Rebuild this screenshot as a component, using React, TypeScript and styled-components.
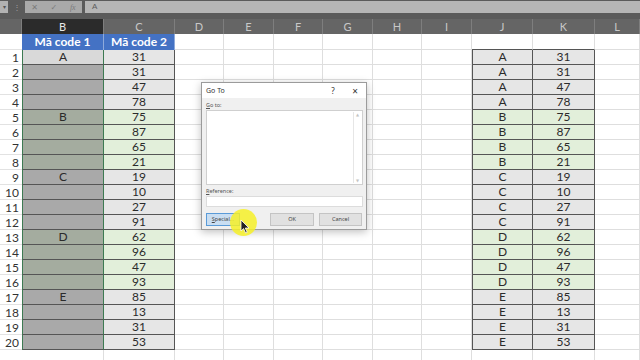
import * as React from "react";
import styled, { createGlobalStyle } from "styled-components";

const GlobalStyle = createGlobalStyle`
  html, body {
    margin: 0;
    padding: 0;
    background: #ffffff;
    overflow: hidden;
  }
`;

const colWidths = [22, 82, 71, 49, 50, 49, 50, 49, 50, 61, 62, 45];
const colLetters = ["", "B", "C", "D", "E", "F", "G", "H", "I", "J", "K", "L"];
const codes = ["A", "B", "C", "D", "E"];
const values = [31, 31, 47, 78, 75, 87, 65, 21, 19, 10, 27, 91, 62, 96, 47, 93, 85, 13, 31, 53];

const Screen = styled.div`
  position: relative;
  width: 640px;
  height: 360px;
  overflow: hidden;
  font-family: Lato, "Liberation Sans", sans-serif;
`;

const FormulaBar = styled.div`
  height: 19px;
  box-sizing: border-box;
  padding-top: 1px;
  background: #5b5b5b;
  display: flex;
  align-items: flex-start;
`;

const NameBoxEnd = styled.div`
  width: 8px;
  height: 12px;
  background: #b2b2b2;
  color: #555;
  font-size: 6px;
  line-height: 12px;
  text-align: center;
`;

const Dots = styled.div`
  width: 17px;
  height: 12px;
  color: #a0a0a0;
  font-size: 8px;
  line-height: 12px;
  text-align: center;
`;

const IconBox = styled.div`
  width: 57px;
  height: 12px;
  background: #a9a9a9;
  display: flex;
  align-items: center;
  justify-content: space-around;
  color: #7a7a7a;
  font-size: 8px;
  font-family: "DejaVu Sans", sans-serif;
`;

const FormulaInput = styled.div`
  flex: 1;
  margin-left: 3px;
  height: 12px;
  background: #b6b6b6;
  color: #5c5c5c;
  font-size: 8px;
  line-height: 12px;
  padding-left: 7px;
  font-family: "Liberation Sans", sans-serif;
`;

const Sheet = styled.div`
  display: grid;
  grid-template-columns: ${colWidths.map((w) => `${w}px`).join(" ")};
  grid-template-rows: 15px 16px repeat(21, 15px);
`;

const ColHeader = styled.div<{ $active?: boolean }>`
  box-sizing: border-box;
  background: ${({ $active }) => ($active ? "#2b2b2b" : "#656565")};
  border-right: 1px solid #7e7e7e;
  color: ${({ $active }) => ($active ? "#e8e8e8" : "#c8c8c8")};
  font-size: 11px;
  line-height: 15px;
  text-align: center;
`;

const RowHeader = styled.div`
  box-sizing: border-box;
  border-bottom: 1px solid #e2e2e2;
  color: #333;
  font-size: 12px;
  line-height: 15px;
  text-align: right;
  padding-right: 3px;
`;

const Gridline = styled.div`
  box-sizing: border-box;
  border-right: 1px solid #dedede;
  border-bottom: 1px solid #dedede;
`;

const TitleCell = styled.div`
  box-sizing: border-box;
  background: #4472c4;
  border-right: 1px solid #8eaadb;
  color: #ffffff;
  font-weight: bold;
  font-size: 12px;
  line-height: 16px;
  text-align: center;
`;

const DataCell = styled.div<{ $fill: string; $left?: string; $right?: string }>`
  box-sizing: border-box;
  background: ${({ $fill }) => $fill};
  border-bottom: 1px solid #555;
  border-right: 1px solid ${({ $right }) => $right || "#555"};
  border-left: ${({ $left }) => ($left ? `1px solid ${$left}` : "none")};
  color: #2b2b2b;
  font-size: 12px;
  line-height: 14px;
  text-align: center;
`;

/* Go To dialog */
const Dialog = styled.div`
  position: absolute;
  left: 201px;
  top: 82px;
  width: 166px;
  height: 148px;
  box-sizing: border-box;
  border: 1px solid #9b9b9b;
  background: #f0f0f0;
  box-shadow: 0 2px 8px rgba(0, 0, 0, 0.25);
  display: flex;
  flex-direction: column;
  font-family: "Noto Sans", "Open Sans", sans-serif;
  color: #333;
`;

const TitleBar = styled.div`
  height: 15px;
  background: #ffffff;
  display: flex;
  align-items: center;
  padding-left: 4px;
  font-size: 7px;
`;

const TitleText = styled.span`
  flex: 1;
`;

const TitleButton = styled.span<{ $size?: number }>`
  width: 22px;
  text-align: center;
  font-size: ${({ $size }) => $size || 8}px;
`;

const DialogBody = styled.div`
  flex: 1;
  display: flex;
  flex-direction: column;
  padding: 3px 3px 3px 4px;
`;

const Label = styled.div<{ $mt?: number }>`
  font-size: 5.5px;
  height: 8px;
  line-height: 8px;
  margin-top: ${({ $mt }) => $mt || 0}px;
  color: #555;
`;

const Underlined = styled.span`
  text-decoration: underline;
`;

const ListBox = styled.div`
  height: 75px;
  box-sizing: border-box;
  margin-top: 1px;
  background: #ffffff;
  border: 1px solid #cfcfcf;
  display: flex;
  justify-content: flex-end;
`;

const ScrollTrack = styled.div`
  width: 7px;
  margin: 1px;
  border-left: 1px solid #e6e6e6;
  display: flex;
  flex-direction: column;
  justify-content: space-between;
  align-items: center;
  color: #c4c4c4;
  font-size: 4px;
  font-family: "DejaVu Sans", sans-serif;
`;

const RefInput = styled.div`
  height: 11px;
  box-sizing: border-box;
  margin-top: 1px;
  background: #ffffff;
  border: 1px solid #dcdcdc;
`;

const ButtonRow = styled.div`
  display: flex;
  margin-top: 6px;
  gap: 5px;
`;

const DlgButton = styled.div<{ $primary?: boolean; $w: number; $ml?: number }>`
  width: ${({ $w }) => $w}px;
  height: 13px;
  margin-left: ${({ $ml }) => $ml || 0}px;
  box-sizing: border-box;
  background: ${({ $primary }) => ($primary ? "#c9def2" : "#e1e1e1")};
  border: 1px solid ${({ $primary }) => ($primary ? "#5a9bd8" : "#c4c4c4")};
  font-size: 5.5px;
  line-height: 11px;
  text-align: center;
  color: #444;
`;

const Highlight = styled.div`
  position: absolute;
  left: 230px;
  top: 209px;
  width: 27px;
  height: 27px;
  border-radius: 50%;
  background: rgba(246, 240, 40, 0.85);
`;

const Pointer = styled.svg`
  position: absolute;
  left: 240px;
  top: 219px;
`;

const FxGlyph = styled.span`
  font-style: italic;
  font-family: "Liberation Serif", serif;
`;

const u = (s: string) => (
  <>
    <Underlined>{s[0]}</Underlined>
    {s.slice(1)}
  </>
);

export default function App() {
  const cells: React.ReactNode[] = [];

  // column headers
  colLetters.forEach((l, i) =>
    cells.push(
      <ColHeader key={`h${i}`} $active={l === "B"}>
        {l}
      </ColHeader>
    )
  );

  // title row
  colLetters.forEach((l, i) => {
    if (i === 0) cells.push(<RowHeader key="t0" />);
    else if (l === "B") cells.push(<TitleCell key="tB">Mã code 1</TitleCell>);
    else if (l === "C") cells.push(<TitleCell key="tC">Mã code 2</TitleCell>);
    else if (l === "J" || l === "K")
      cells.push(<Gridline key={`t${l}`} style={{ borderBottomColor: "#555" }} />);
    else cells.push(<Gridline key={`t${i}`} />);
  });

  values.forEach((v, r) => {
    const g = Math.floor(r / 4);
    const green = g % 2 === 1;
    const code = codes[g];
    const light = green ? "#e2efda" : "#e6e6e6";
    const selFill = r === 0 ? "#d9d9d9" : green ? "#a4ac9f" : "#a9a9a9";
    colLetters.forEach((l, i) => {
      const k = `${r}-${i}`;
      if (i === 0) cells.push(<RowHeader key={k}>{r + 1}</RowHeader>);
      else if (l === "B")
        cells.push(
          <DataCell key={k} $fill={selFill} $left="#3d7a52" $right="#3d7a52">
            {r % 4 === 0 ? code : ""}
          </DataCell>
        );
      else if (l === "C")
        cells.push(
          <DataCell key={k} $fill={light}>
            {v}
          </DataCell>
        );
      else if (l === "J")
        cells.push(
          <DataCell key={k} $fill={light} $left="#555">
            {code}
          </DataCell>
        );
      else if (l === "K")
        cells.push(
          <DataCell key={k} $fill={light}>
            {v}
          </DataCell>
        );
      else cells.push(<Gridline key={k} />);
    });
  });

  colLetters.forEach((_, i) =>
    cells.push(i === 0 ? <RowHeader key={`e${i}`} /> : <Gridline key={`e${i}`} />)
  );

  return (
    <Screen>
      <GlobalStyle />
      <FormulaBar>
        <NameBoxEnd>▾</NameBoxEnd>
        <Dots>⋮</Dots>
        <IconBox>
          <span>✕</span>
          <span>✓</span>
          <FxGlyph>fx</FxGlyph>
        </IconBox>
        <FormulaInput>A</FormulaInput>
      </FormulaBar>
      <Sheet>{cells}</Sheet>

      <Dialog>
        <TitleBar>
          <TitleText>Go To</TitleText>
          <TitleButton>?</TitleButton>
          <TitleButton $size={10}>×</TitleButton>
        </TitleBar>
        <DialogBody>
          <Label>{u("Go to:")}</Label>
          <ListBox>
            <ScrollTrack>
              <span>▲</span>
              <span>▼</span>
            </ScrollTrack>
          </ListBox>
          <Label $mt={2}>{u("Reference:")}</Label>
          <RefInput />
          <ButtonRow>
            <DlgButton $primary $w={34}>
              {u("Special...")}
            </DlgButton>
            <DlgButton $w={44} $ml={25}>
              OK
            </DlgButton>
            <DlgButton $w={43}>Cancel</DlgButton>
          </ButtonRow>
        </DialogBody>
      </Dialog>

      <Highlight />
      <Pointer width="10" height="15" viewBox="0 0 10 15">
        <path d="M1 1 L1 12 L3.6 9.6 L5.6 14 L7.2 13.3 L5.3 9 L9 9 Z" fill="#222" stroke="#fff" strokeWidth="0.8" />
      </Pointer>
    </Screen>
  );
}
